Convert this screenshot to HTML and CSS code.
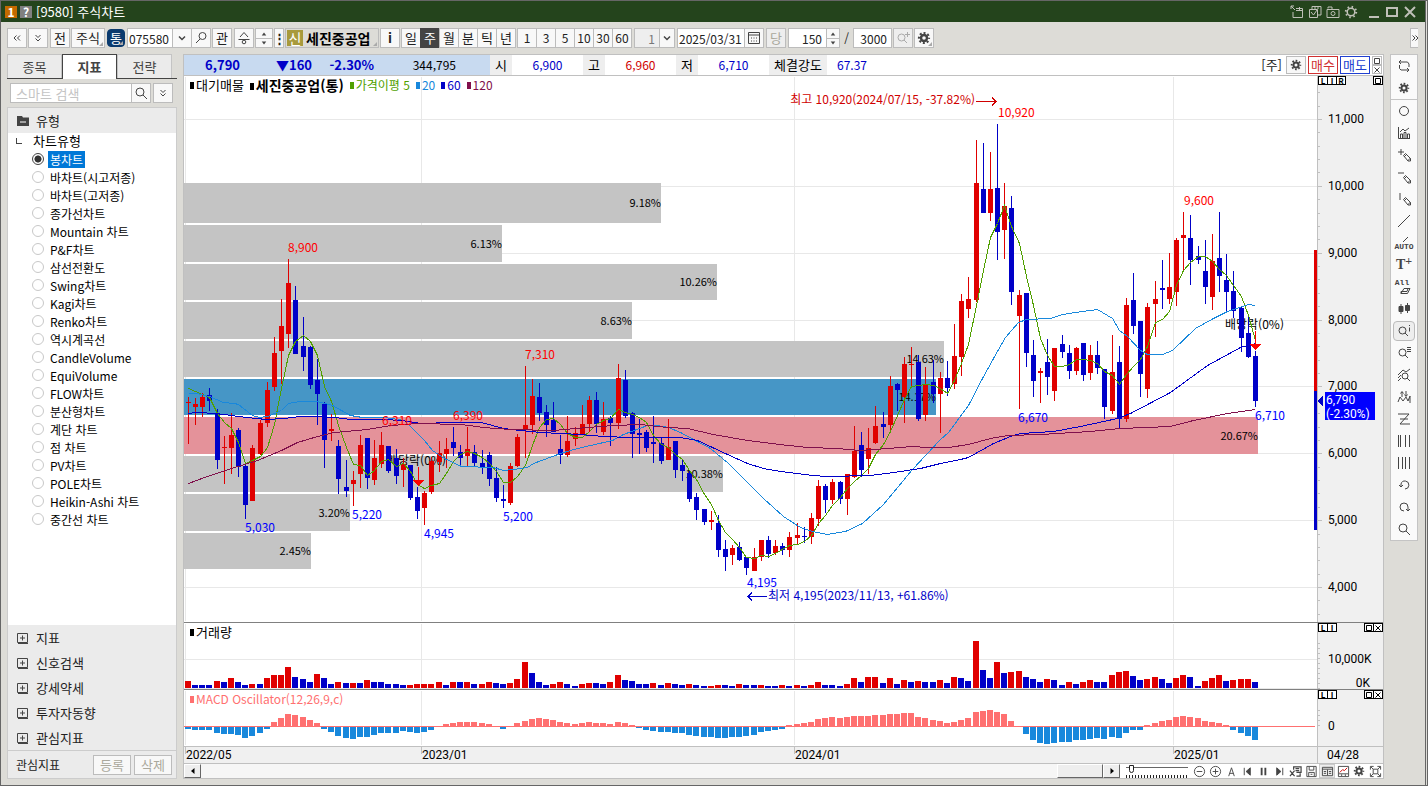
FILE: index.html
```
<!DOCTYPE html>
<html lang="ko">
<head>
    <meta charset="UTF-8">
    <meta name="viewport" content="width=device-width, initial-scale=1.0">
    <title>[9580] 주식차트</title>
    <link rel="stylesheet" href="styles.css">
</head>
<body>
    <!-- shared icons -->
    <svg class="defs" aria-hidden="true">
        <symbol id="gear" viewBox="0 0 14 14"><circle cx="7" cy="7" r="3" fill="none" stroke="currentColor" stroke-width="2.4"/><circle cx="7" cy="7" r="5" fill="none" stroke="currentColor" stroke-width="2.2" stroke-dasharray="1.96 1.96" stroke-dashoffset="1"/></symbol>
        <symbol id="search" viewBox="0 0 14 14"><circle cx="6" cy="6" r="4"/><path d="M9 9l4 4"/></symbol>
        <symbol id="plusbox" viewBox="0 0 12 12"><path d="M.5 1.5h10v9H.5zM3 6h5M5.500 3.500v5M1 11.500h10"/></symbol>
        <symbol id="pencil" viewBox="0 0 14 14"><path d="M5.500 6.500l2-2 5 5v2.500h-2.500zM6 8l3-3M9.500 12l3-3"/></symbol>
        <symbol id="square" viewBox="0 0 8 8"><path d="M1.500 1.500h5v5h-5z"/></symbol>
        <symbol id="cross" viewBox="0 0 8 8"><path d="M1.500 1.500l5 5M6.500 1.500l-5 5"/></symbol>
        <symbol id="up" viewBox="0 0 8 8"><path d="M1 6l3-4 3 4z"/></symbol>
        <symbol id="down" viewBox="0 0 8 8"><path d="M1 2l3 4 3-4z"/></symbol>
    </svg>

    <div class="window">
        <header class="titlebar">
            <span class="badge orange">1</span>
            <span class="badge gray">?</span>
            <h1>[9580] 주식차트</h1>
            <div class="window-buttons">
                <button aria-label="분리"><svg viewBox="0 0 14 14"><path d="M1 1l4 4M1 4V1h3M3 7v5.500h9.500V3.500H6M6 5.500h6.500M9.500 2v3"/></svg></button>
                <button aria-label="복사"><svg viewBox="0 0 14 14"><path d="M1.500 4.500h8v8h-8zM4 4V1.500h9V10h-3M7 2v2M10 2v2M3 7l2.500 3L9 5"/></svg></button>
                <button aria-label="캡처"><svg viewBox="0 0 14 14"><path d="M1 4.500h12v8H1zM2 3.500V2h4v2"/><circle cx="7" cy="8.500" r="2"/></svg></button>
                <button aria-label="설정"><svg viewBox="0 0 14 14"><circle cx="7" cy="7" r="3.800" stroke-width="1.500"/><circle cx="7" cy="7" r="5.200" stroke-width="2" stroke-dasharray="1.500 2.580"/></svg></button>
                <button class="big first" aria-label="최소화"><svg viewBox="0 0 14 14"><path d="M2 12h10"/></svg></button>
                <button class="big" aria-label="최대화"><svg viewBox="0 0 14 14"><path d="M2 3h10v8H2z"/></svg></button>
                <button class="big" aria-label="닫기"><svg viewBox="0 0 14 14"><path d="M2 2l10 10M12 2L2 12"/></svg></button>
            </div>
        </header>

        <div class="toolbar">
            <button class="btn" aria-label="이전"><svg viewBox="0 0 14 14"><path d="M6.500 4.500L4 7l2.500 2.500M10 4.500L7.500 7l2.500 2.500"/></svg></button>
            <button class="btn" aria-label="더보기"><svg viewBox="0 0 14 14"><path d="M4.500 4l2.500 2.500L9.500 4M4.500 7.500L7 10l2.500-2.500"/></svg></button>
            <button class="btn gap-left">전</button>
            <button class="btn wide corner">주식</button>
            <button class="btn navy corner">통</button>
            <div class="joined">
                <input class="code" type="text" value="075580" aria-label="종목코드">
                <button class="btn" aria-label="목록"><svg viewBox="0 0 14 14"><path d="M4 5.500l3 3 3-3" stroke-width="1.500"/></svg></button>
                <button class="btn" aria-label="찾기"><svg viewBox="0 0 14 14"><circle cx="8.500" cy="5" r="3.500"/><path d="M6 8l-4 4"/></svg></button>
            </div>
            <button class="btn">관</button>
            <button class="btn up gap-left" aria-label="이동"><svg viewBox="0 0 14 14"><path d="M7 1.500L3 6M7 1.500L11 6M1.500 8.500h11"/><circle cx="7" cy="11" r="1.800"/></svg></button>
            <div class="spin"><button aria-label="위"><svg><use href="#up"/></svg></button><button aria-label="아래"><svg><use href="#down"/></svg></button></div>
            <button class="btn dots" aria-label="메뉴">⋮</button>
            <button class="stock corner"><span class="new">신</span><b>세진중공업</b></button>
            <button class="btn"><b>i</b></button>
            <div class="joined periods">
                <button class="btn">일</button>
                <button class="btn on">주</button>
                <button class="btn">월</button>
                <button class="btn">분</button>
                <button class="btn">틱</button>
                <button class="btn">년</button>
            </div>
            <div class="joined periods numbers">
                <button class="btn">1</button>
                <button class="btn">3</button>
                <button class="btn">5</button>
                <button class="btn">10</button>
                <button class="btn">30</button>
                <button class="btn">60</button>
            </div>
            <div class="joined gap-left">
                <input class="unit" type="text" value="1" aria-label="단위">
                <button class="btn small" aria-label="단위 목록"><svg viewBox="0 0 14 14"><path d="M4 5.500l3 3 3-3" stroke-width="1.500"/></svg></button>
            </div>
            <div class="joined gap-left">
                <input class="date" type="text" value="2025/03/31" aria-label="날짜">
                <button class="btn" aria-label="달력"><svg viewBox="0 0 14 14"><path d="M1.500 1.500h11v11h-11zM1.500 4h11"/><path d="M4 7h7M4 10h7" stroke-dasharray="1 1.500"/></svg></button>
            </div>
            <button class="btn gap-left dim">당</button>
            <div class="joined gap-left">
                <input class="count" type="text" value="150" aria-label="표시 개수">
                <div class="spin narrow"><button aria-label="증가"><svg><use href="#up"/></svg></button><button aria-label="감소"><svg><use href="#down"/></svg></button></div>
            </div>
            <span class="slash">/</span>
            <input class="total" type="text" value="3000" aria-label="전체 개수">
            <button class="btn dim" aria-label="확대"><svg viewBox="0 0 14 14"><circle cx="5.500" cy="6.500" r="3.500"/><path d="M8 9l3 3M9 3.500h5M11.500 1v5"/></svg></button>
            <button class="btn corner" aria-label="설정"><svg class="fill"><use href="#gear"/></svg></button>
            <button class="btn expand" aria-label="도구 더보기"><svg viewBox="0 0 6 14"><path d="M.5 4.500L3 7 .5 9.500M3.500 4.500L6 7 3.500 9.500"/></svg></button>
        </div>

        <div class="body">
            <aside class="sidebar">
                <nav class="tabs">
                    <button>종목</button>
                    <button class="on">지표</button>
                    <button>전략</button>
                </nav>
                <div class="find">
                    <div class="joined">
                        <input type="text" placeholder="스마트 검색" aria-label="스마트 검색">
                        <button class="btn" aria-label="검색"><svg><use href="#search"/></svg></button>
                    </div>
                    <button class="btn" aria-label="펼치기"><svg viewBox="0 0 14 14"><path d="M4.500 4l2.500 2.500L9.500 4M4.500 7.500L7 10l2.500-2.500"/></svg></button>
                </div>
                <button class="section first"><svg viewBox="0 0 12 12"><path d="M0 1h5l1 1.500h6V11H0z" fill="#444" stroke="none"/><path d="M3 7h6" stroke="#fff"/></svg>유형</button>
                <fieldset class="tree">
                    <legend>차트유형</legend>
                    <label><input type="radio" name="type" checked><span>봉차트</span></label>
                    <label><input type="radio" name="type"><span>바차트(시고저종)</span></label>
                    <label><input type="radio" name="type"><span>바차트(고저종)</span></label>
                    <label><input type="radio" name="type"><span>종가선차트</span></label>
                    <label><input type="radio" name="type"><span>Mountain 차트</span></label>
                    <label><input type="radio" name="type"><span>P&amp;F차트</span></label>
                    <label><input type="radio" name="type"><span>삼선전환도</span></label>
                    <label><input type="radio" name="type"><span>Swing차트</span></label>
                    <label><input type="radio" name="type"><span>Kagi차트</span></label>
                    <label><input type="radio" name="type"><span>Renko차트</span></label>
                    <label><input type="radio" name="type"><span>역시계곡선</span></label>
                    <label><input type="radio" name="type"><span>CandleVolume</span></label>
                    <label><input type="radio" name="type"><span>EquiVolume</span></label>
                    <label><input type="radio" name="type"><span>FLOW차트</span></label>
                    <label><input type="radio" name="type"><span>분산형차트</span></label>
                    <label><input type="radio" name="type"><span>계단 차트</span></label>
                    <label><input type="radio" name="type"><span>점 차트</span></label>
                    <label><input type="radio" name="type"><span>PV차트</span></label>
                    <label><input type="radio" name="type"><span>POLE차트</span></label>
                    <label><input type="radio" name="type"><span>Heikin-Ashi 차트</span></label>
                    <label><input type="radio" name="type"><span>중간선 차트</span></label>
                </fieldset>
                <button class="section"><svg><use href="#plusbox"/></svg>지표</button>
                <button class="section"><svg><use href="#plusbox"/></svg>신호검색</button>
                <button class="section"><svg><use href="#plusbox"/></svg>강세약세</button>
                <button class="section"><svg><use href="#plusbox"/></svg>투자자동향</button>
                <button class="section"><svg><use href="#plusbox"/></svg>관심지표</button>
                <div class="favorites">
                    <span>관심지표</span>
                    <button>등록</button>
                    <button>삭제</button>
                </div>
            </aside>

            <main class="chart">
                <div class="quote">
                    <div class="now"><b class="price">6,790</b><b class="diff">▼160</b><b class="rate">-2.30%</b><span class="vol">344,795</span></div>
                    <span class="key">시</span><span class="val">6,900</span>
                    <span class="key">고</span><span class="val red">6,960</span>
                    <span class="key">저</span><span class="val">6,710</span>
                    <span class="key long">체결강도</span><span class="val power">67.37</span>
                    <div class="order">
                        <span>[주]</span>
                        <button class="btn" aria-label="설정"><svg class="fill"><use href="#gear"/></svg></button>
                        <button class="buy">매수</button>
                        <button class="sell">매도</button>
                        <div class="mini"><button aria-label="최대화"><svg><use href="#square"/></svg></button><button aria-label="닫기"><svg><use href="#cross"/></svg></button></div>
                    </div>
                </div>

                <section class="panel price-panel">
                    <svg id="price"></svg>
                    <div class="legend">
                        <span>대기매물</span>
                        <b>세진중공업(통)</b>
                        <span class="ma5">가격이평 5</span>
                        <span class="ma20">20</span>
                        <span class="ma60">60</span>
                        <span class="ma120">120</span>
                    </div>
                    <div class="scale"><button>L</button><button>I</button><button>R</button></div>
                    <div class="close"><button aria-label="최대화"><svg><use href="#square"/></svg></button></div>
                </section>
                <section class="panel volume-panel">
                    <svg id="volume"></svg>
                    <div class="legend"><span>거래량</span></div>
                    <div class="scale"><button>L</button><button>I</button></div>
                    <div class="close"><button aria-label="최대화"><svg><use href="#square"/></svg></button><button aria-label="닫기"><svg><use href="#cross"/></svg></button></div>
                </section>
                <section class="panel macd-panel">
                    <svg id="macd"></svg>
                    <div class="legend"><span class="osc">MACD Oscillator(12,26,9,c)</span></div>
                    <div class="scale"><button>L</button><button>I</button></div>
                    <div class="close"><button aria-label="최대화"><svg><use href="#square"/></svg></button><button aria-label="닫기"><svg><use href="#cross"/></svg></button></div>
                </section>
                <section class="panel date-panel"><svg id="dates"></svg></section>

                <div class="bottombar">
                    <button class="arrow" aria-label="왼쪽"><svg viewBox="0 0 8 8"><path d="M5.500 1v6L2 4z"/></svg></button>
                    <div class="track"><div class="thumb"></div></div>
                    <button class="arrow" aria-label="오른쪽"><svg viewBox="0 0 8 8"><path d="M2.500 1v6L6 4z"/></svg></button>
                    <div class="zoom"><input type="range" min="0" max="20" value="1" aria-label="확대"></div>
                    <div class="tools">
                        <button aria-label="축소"><svg viewBox="0 0 14 14"><circle cx="7" cy="7" r="5.500"/><path d="M4 7h6"/></svg></button>
                        <button aria-label="확대"><svg viewBox="0 0 14 14"><circle cx="7" cy="7" r="5.500"/><path d="M4 7h6M7 4v6"/></svg></button>
                        <button aria-label="자동"><svg viewBox="0 0 14 14"><path d="M4 12L7 3l3 9M5 9h4"/></svg></button>
                        <button aria-label="처음"><svg viewBox="0 0 14 14"><path d="M3.500 3v8"/><path d="M10 3v8L5.500 7z" fill="#444"/></svg></button>
                        <button aria-label="정지"><svg viewBox="0 0 14 14"><path d="M5 3v8M9 3v8" stroke-width="2"/></svg></button>
                        <button aria-label="끝"><svg viewBox="0 0 14 14"><path d="M10.500 3v8"/><path d="M4 3v8l4.500-4z" fill="#444"/></svg></button>
                        <button aria-label="엑셀"><svg viewBox="0 0 14 14"><path d="M5 5V2h8v6H8M7 4h4M7 6h4M1 6l5 6M6 6l-5 6M8 12h4V9" stroke-width="1.300"/></svg></button>
                        <button aria-label="저장"><svg viewBox="0 0 14 14"><path d="M2 1.500h10v11H2zM4.500 2v3.500h5V2M4 12V8h6v4M6 10h2"/></svg></button>
                        <button class="on" aria-label="표"><svg viewBox="0 0 14 14"><path d="M1.500 2.500h11v9h-11zM1.500 4.500h11M7 5v6M3 7h2.500M3 9h2.500M8.500 7H11M8.500 9H11"/></svg></button>
                        <button aria-label="차트"><svg viewBox="0 0 14 14"><path d="M1.500 1.500h11v11h-11zM2 9.500h10M5 10v2M9 10v2"/><path d="M3 8l3-3 2 1 3-3" stroke="#c00"/></svg></button>
                        <button aria-label="설정"><svg class="fill"><use href="#gear"/></svg></button>
                        <button aria-label="전체화면"><svg viewBox="0 0 14 14"><path d="M1.500 5V1.500H5M9 1.500h3.500V5M12.500 9v3.500H9M5 12.500H1.500V9M2 2l2.500 2.500M12 2L9.500 4.500M12 12L9.500 9.500M2 12l2.500-2.500M4.500 4.500h5v5h-5z"/></svg></button>
                    </div>
                </div>
            </main>

            <nav class="rail">
                <button aria-label="새로고침"><svg viewBox="0 0 14 14"><path d="M4 1L2 3l2 2M2 3h8.500l1.500 2v3M10 9l2 2-2 2M12 11H4L2.500 9.500V6"/></svg></button>
                <button class="line" aria-label="설정"><svg class="fill"><use href="#gear"/></svg></button>
                <button aria-label="원"><svg viewBox="0 0 14 14"><circle cx="7" cy="7" r="4.500"/></svg></button>
                <button aria-label="지표"><svg viewBox="0 0 14 14"><path d="M1.500 1v11.500H13M3.500 12V8h2v4M7 12V6.500h2V12M10.500 12V8h2v4M3 6l3-3 2 2 4-3"/></svg></button>
                <button aria-label="추가"><svg viewBox="0 0 14 14"><path d="M1 4h6M4 1v6"/><use href="#pencil" x="1" y="1" width="14" height="14"/></svg></button>
                <button aria-label="수평선"><svg viewBox="0 0 14 14"><path d="M1 3h6"/><use href="#pencil" x="1" y="1" width="14" height="14"/></svg></button>
                <button aria-label="수직선"><svg viewBox="0 0 14 14"><path d="M3 1v7"/><use href="#pencil" x="1" y="1" width="14" height="14"/></svg></button>
                <button aria-label="추세선"><svg viewBox="0 0 14 14"><path d="M1 13L13 1"/></svg></button>
                <button class="auto"><svg viewBox="0 0 14 6"><path d="M6 6l5-5"/></svg>AUTO</button>
                <button class="text">T<sup>+</sup></button>
                <button class="all"><span>All</span><svg viewBox="0 0 14 8"><path d="M4 6.500l3-5h6l-2.500 5H4v-2h6l1-3"/></svg></button>
                <button aria-label="봉"><svg viewBox="0 0 14 14"><path d="M4 2v10M10.500 1v10"/><path d="M2 4.500h4v5H2zM8.500 3.500h4v5h-4z" fill="#444"/></svg></button>
                <button class="on" aria-label="정보"><svg viewBox="0 0 14 14"><circle cx="5.500" cy="6.500" r="3.500"/><path d="M8 9l3 3M12.500 3.500v4M12.500 1v1"/></svg></button>
                <button aria-label="목록"><svg viewBox="0 0 14 14"><circle cx="5.500" cy="6.500" r="3.500"/><path d="M8 9l3 3M10 1.500h4M10 3.500h4M10 5.500h4"/></svg></button>
                <button aria-label="분석"><svg viewBox="0 0 14 14"><path d="M1 7l5-5 3 2 4-3M1 10l3-3M1 13l3-3"/><circle cx="8" cy="8" r="3"/><path d="M10 10l3 3"/></svg></button>
                <button aria-label="패턴"><svg viewBox="0 0 14 14"><path d="M1 12l2-5 3 4 3-4 2 4 2-5v7M5 7V2M3.500 3.500L5 1.500l1.500 2M9 1v5M7.500 4.500L9 6.500l1.500-2"/></svg></button>
                <button aria-label="지그재그"><svg viewBox="0 0 14 14"><path d="M1 2h11L3 12h10M3 7h8"/></svg></button>
                <button aria-label="간격"><svg viewBox="0 0 14 14"><path d="M1.500 1v12M3.500 1v12M8.500 1v12M12.500 1v12"/></svg></button>
                <button aria-label="등간격"><svg viewBox="0 0 14 14"><path d="M1.500 1v12M5.500 1v12M8.500 1v12M12.500 1v12"/></svg></button>
                <button aria-label="되돌리기"><svg viewBox="0 0 14 14"><path d="M4 8V6a4 4 0 1 1 4 5M2 7l2 2 2-2"/></svg></button>
                <button aria-label="다시하기"><svg viewBox="0 0 14 14"><path d="M7 11a4 4 0 1 1 4-4v4M9 9l2 2 2-2"/></svg></button>
                <button aria-label="검색"><svg><use href="#search"/></svg></button>
            </nav>
        </div>
    </div>

    <script src="chart.js"></script>
</body>
</html>
```
FILE: styles.css
```
* {
    box-sizing: border-box;
}
body {
    margin: 0;
    font-family: "Noto Sans CJK KR", "Noto Sans", sans-serif;
    font-size: 12px;
    line-height: 18px;
    color: #222;
}
button, input {
    font: inherit;
    color: inherit;
    margin: 0;
    padding: 0;
    border: 0;
    border-radius: 0;
    background: none;
}
button {
    display: flex;
    align-items: center;
    justify-content: center;
    white-space: nowrap;
}
svg {
    fill: none;
    stroke: #444;
    width: 14px;
    height: 14px;
    flex: none;
}
svg.fill {
    color: #444;
    stroke: none;
}
.defs {
    position: absolute;
    width: 0;
    height: 0;
}
.window {
    display: flex;
    flex-direction: column;
    min-height: 100vh;
    background: #dddcd7;
    border: 1px solid #666;
    border-right: 3px double #666;
}

/* title bar */
.titlebar {
    display: flex;
    align-items: center;
    gap: 3px;
    height: 21px;
    padding: 0 8px 0 4px;
    background: #24441c;
    color: #fff;
}
.titlebar h1 {
    margin: 0 0 0 1px;
    font-size: 13px;
    font-weight: normal;
}
.badge {
    width: 12px;
    height: 12px;
    line-height: 12px;
    text-align: center;
    font-weight: bold;
}
.orange {
    background: #c46a00;
}
.gray {
    background: #808080;
}
.window-buttons {
    display: flex;
    gap: 4px;
    margin-left: auto;
}
.window-buttons svg {
    stroke: #c0c0b8;
}
.window-buttons .first {
    margin-left: 5px;
}
.window-buttons .big svg {
    stroke-width: 2;
}

/* toolbar */
.toolbar {
    display: flex;
    align-items: center;
    height: 32px;
    padding: 0 7px 0 6px;
    gap: 1px;
}
.btn {
    width: 20px;
    height: 20px;
    flex: none;
    background: #f8f8f8;
    border: 1px solid #bcbcbc;
    font-size: 13px;
    color: #222;
}
.btn.wide {
    width: 34px;
}
.btn.small {
    width: 16px;
}
.btn.up {
    margin-left: 1px;
}
.btn.dots {
    width: 10px;
    font-weight: bold;
}
.btn.navy {
    width: 18px;
    height: 18px;
    margin: 0 1px;
    background: #0a3a6e;
    border-color: #0a3a6e;
    border-radius: 4px;
    color: #fff;
}
.btn.dim {
    background: #eee;
    color: #aaa89c;
}
.btn.dim svg {
    stroke: #aaa;
}
.gap-left {
    margin-left: 1px;
}
.corner {
    position: relative;
}
.corner::after {
    content: "";
    position: absolute;
    right: 1px;
    bottom: 1px;
    border: 2px solid #aaa;
    border-top-color: transparent;
    border-left-color: transparent;
}
.joined {
    display: flex;
}
.joined .btn {
    margin-left: -1px;
}
.periods .btn:first-child {
    margin-left: 0;
}
.numbers .btn {
    font-size: 12px;
}
.btn.on {
    background: #444;
    border-color: #444;
    color: #fff;
}
.toolbar input {
    height: 20px;
    border: 1px solid #bcbcbc;
    background: #fff;
    font-size: 12px;
}
.toolbar .code {
    width: 46px;
    padding-left: 1px;
}
.toolbar .unit {
    width: 26px;
    padding-right: 4px;
    text-align: right;
    background: #eee;
    color: #777;
}
.toolbar .date {
    width: 68px;
    padding-left: 1px;
}
.toolbar .count, .toolbar .total {
    width: 39px;
    padding-right: 4px;
    text-align: right;
}
.slash {
    width: 11px;
    text-align: center;
}
.spin {
    display: flex;
    flex-direction: column;
    width: 18px;
    height: 20px;
    border: 1px solid #bcbcbc;
    background: #f8f8f8;
}
.spin.narrow {
    width: 14px;
    margin-left: -1px;
}
.spin button {
    height: 9px;
}
.spin svg {
    width: 6px;
    height: 6px;
    fill: #444;
    stroke: none;
}
.spin button + button {
    border-top: 1px solid #bcbcbc;
}
.stock {
    width: 94px;
    height: 20px;
    justify-content: flex-start;
    gap: 3px;
    padding: 1px;
    border: 1px solid #bcbcbc;
    font-size: 14px;
    color: #000;
}
.new {
    width: 16px;
    line-height: 16px;
    background: #a89a3c;
    color: #fff;
}
.btn.expand {
    width: 8px;
    margin-left: auto;
    border-right: 0;
}
.btn.expand svg {
    width: 6px;
}

.body {
    display: flex;
    flex: 1;
    align-items: stretch;
    gap: 6px;
    padding: 0 7px 6px 6px;
}

/* sidebar */
.sidebar {
    display: flex;
    flex-direction: column;
    width: 170px;
    flex: none;
}
.tabs {
    display: flex;
    height: 25px;
    border-bottom: 1px solid #444;
}
.tabs button {
    width: 55px;
    height: 24px;
    background: #ebebeb;
    border: 1px solid #c4c4c4;
    border-bottom: 0;
    font-size: 13px;
    color: #444;
}
.tabs .on {
    height: 25px;
    background: #fff;
    border-color: #444;
    font-weight: bold;
}
.find {
    display: flex;
    justify-content: space-between;
    padding: 4px 4px 4px 3px;
    height: 28px;
}
.find input {
    width: 122px;
    height: 20px;
    padding-left: 5px;
    border: 1px solid #bcbcbc;
    background: #fff;
    font-size: 13px;
}
.find input::placeholder {
    color: #c4c4c4;
}
.section {
    height: 25px;
    flex: none;
    justify-content: flex-start;
    gap: 7px;
    padding-left: 9px;
    background: #ebebeb;
    border: 0 solid #ccc;
    border-width: 0 1px;
    font-size: 13px;
}
.section.first {
    height: 26px;
    border-top-width: 1px;
}
.section svg {
    width: 12px;
    height: 12px;
}
.tree {
    flex: 1;
    min-width: 0;
    margin: 0;
    padding: 0 0 0 24px;
    border: 0 solid #ccc;
    border-width: 0 1px;
    background: #fff;
    color: #000;
}
.tree legend {
    float: left;
    width: 100%;
    height: 17px;
    padding: 0;
    line-height: 16px;
    font-size: 13px;
}
.tree legend::before {
    content: "";
    float: left;
    width: 5px;
    height: 5px;
    margin: 5px 11px 0 -16px;
    border: 1px solid #444;
    border-width: 0 0 1px 1px;
}
.tree label {
    display: flex;
    clear: both;
    align-items: center;
    gap: 4px;
    height: 18px;
}
.tree input {
    appearance: none;
    width: 12px;
    height: 12px;
    border: 1px solid #c8c8c8;
    border-radius: 50%;
    background: #fff;
}
.tree input:checked {
    border-color: #444;
    background: radial-gradient(#333 45%, #fff 55%);
}
.tree span {
    padding: 0 2px;
    line-height: 17px;
}
.tree input:checked + span {
    background: #0078d7;
    color: #fff;
}
.favorites {
    display: flex;
    align-items: center;
    gap: 3px;
    height: 29px;
    padding: 0 4px 0 8px;
    border: 1px solid #ccc;
    background: #ebebeb;
}
.favorites span {
    flex: 1;
}
.favorites button {
    width: 38px;
    height: 20px;
    border: 1px solid #bcbcbc;
    background: #f8f8f8;
    font-size: 13px;
    color: #aaa89c;
}

/* quote bar */
.chart {
    display: flex;
    flex-direction: column;
    flex: 1;
    min-width: 0;
    border: 1px solid #c0c0c0;
    background: #fff;
}
.quote {
    display: flex;
    height: 21px;
    line-height: 20px;
    border-bottom: 1px solid #c0c0c0;
    color: #0000c8;
}
.now {
    display: flex;
    width: 306px;
    background: #c8daf0;
    text-align: right;
}
.now b {
    font-size: 13px;
}
.now .price {
    width: 56px;
}
.now .diff {
    width: 72px;
}
.now .rate {
    width: 62px;
}
.now .vol {
    width: 82px;
    color: #000;
}
.key {
    width: 22px;
    background: #eee;
    text-align: center;
    font-size: 13px;
    color: #000;
}
.key.long {
    width: 58px;
}
.val {
    width: 71px;
    text-align: center;
}
.val.power {
    width: 50px;
}
.red {
    color: #d00000;
}
.order {
    display: flex;
    align-items: center;
    gap: 2px;
    margin-left: auto;
    padding-right: 1px;
    color: #222;
}
.order > span {
    margin-right: 2px;
    font-size: 13px;
}
.order .btn, .buy, .sell {
    height: 18px;
}
.order .fill {
    width: 12px;
    height: 12px;
}
.buy, .sell {
    width: 30px;
    border: 1px solid #d03030;
    color: #d03030;
    font-size: 13px;
}
.sell {
    border-color: #2040d0;
    color: #2040d0;
}
.mini button {
    width: 10px;
    height: 9px;
    border: 1px solid #bcbcbc;
}
.mini svg, .close svg {
    width: 8px;
    height: 8px;
}
.close svg {
    stroke: #000;
}

/* chart panels */
.panel {
    position: relative;
    flex: none;
    border-bottom: 1px solid #808080;
}
.panel > svg {
    display: block;
    width: 100%;
    height: 100%;
    overflow: visible;
    stroke: none;
    shape-rendering: crispEdges;
}
.price-panel {
    flex: 1;
    min-height: 400px;
}
.price-panel > svg {
    position: absolute;
}
.volume-panel {
    height: 67px;
}
.macd-panel {
    height: 57px;
    border-color: #c0c0c0;
}
.date-panel {
    height: 17px;
    border-color: #c0c0c0;
}
.legend {
    position: absolute;
    top: 0;
    left: 6px;
    display: flex;
    gap: 6px;
    line-height: 18px;
    font-size: 13px;
    color: #000;
}
.legend > *::before {
    content: "";
    display: inline-block;
    width: 4px;
    height: 7px;
    margin: 0 2px 1px 0;
    background: currentColor;
}
.legend b {
    font-size: 14px;
}
.legend [class] {
    font-size: 12px;
}
.ma5 { color: #50a000; }
.ma20 { color: #1888dc; }
.ma60 { color: #0000c8; }
.ma120 { color: #80104c; }
.osc { color: #ff7070; }
.scale, .close {
    position: absolute;
    top: 0;
    display: flex;
}
.scale {
    right: 56px;
    width: 9px;
}
.close {
    right: 0;
}
.scale button, .close button {
    width: 10px;
    height: 9px;
    flex: none;
    margin-right: -1px;
    border: 1px solid #000;
    background: #fff;
    font-size: 8px;
    line-height: 7px;
    font-weight: bold;
    color: #000;
}
.close button {
    margin: 0 0 0 -1px;
}
#price text {
    font-size: 12px;
}
#price .share {
    font-size: 11px;
}
#price .axis, #volume .axis, #macd .axis, #dates text {
    font-family: Roboto, "Noto Sans", sans-serif;
    font-size: 12px;
}

/* scroll bar and chart tools */
.bottombar {
    display: flex;
    height: 14px;
    align-items: center;
}
.arrow, .thumb {
    height: 14px;
    border: 1px solid;
    border-color: #fff #666 #666 #fff;
    background: #eee;
}
.arrow {
    width: 17px;
}
.arrow svg {
    width: 8px;
    height: 8px;
    fill: #000;
    stroke: none;
}
.track {
    display: flex;
    justify-content: flex-end;
    flex: 1;
    background: #f6f6f6;
}
.thumb {
    width: 46px;
}
.zoom {
    width: 71px;
    padding-left: 6px;
    background: repeating-linear-gradient(90deg, #222 0 1px, transparent 1px 3px) 6px 100% / 62px 3px no-repeat;
}
.zoom input {
    display: block;
    width: 62px;
    height: 14px;
    appearance: none;
    background: linear-gradient(#666, #666) 0 3px / 100% 1px no-repeat;
}
.zoom input::-webkit-slider-thumb {
    appearance: none;
    width: 5px;
    height: 8px;
    margin-top: -4px;
    border: 1px solid #222;
    border-radius: 0 0 3px 3px;
    background: #fff;
}
.tools {
    display: flex;
}
.tools button {
    width: 16px;
    height: 14px;
}
.tools .on {
    border: 1px solid #ccc;
    background: #eee;
}
.tools svg {
    width: 13px;
    height: 13px;
}
.tools .fill {
    width: 12px;
    height: 12px;
}

/* right tool rail */
.rail {
    display: flex;
    flex-direction: column;
    align-self: flex-start;
    width: 28px;
    flex: none;
    border: 1px solid #c4c4c4;
    background: #fafafa;
}
.rail button {
    height: 22px;
    color: #444;
}
.rail .line {
    height: 23px;
    border-bottom: 1px solid #c4c4c4;
}
.rail .fill {
    width: 12px;
    height: 12px;
}
.rail .on {
    width: 22px;
    height: 20px;
    margin: 1px auto;
    border: 1px solid #bbb;
    border-radius: 4px;
    background: #eee;
}
.rail .auto, .rail .all {
    flex-direction: column;
    font-family: "Liberation Mono", monospace;
    font-size: 8px;
    line-height: 8px;
    font-weight: bold;
}
.rail .auto svg, .rail .all svg {
    height: 8px;
}
.rail .all span {
    margin-right: 4px;
}
.rail .text {
    font-family: "Liberation Serif", serif;
    font-size: 14px;
    font-weight: bold;
}
.rail sup {
    line-height: 8px;
    font-size: 12px;
    margin-bottom: 8px;
}
```
FILE: chart.js
```
// Drawing surface the data below was laid out on: plot 184..1317 wide,
// price pane 76..622 high. Everything is rescaled to the real pane size.
const LEFT = 184, PLOT = 1133, TOP = 76, HEIGHT = 546, AXIS = 66;
const RED = '#e00000', BLUE = '#0000c8';

// dir high bodyTop bodyBottom low
const candles = `
r 397 402 403 444,r 398 404 407 425,r 393 397 407 417,b 388 395 401 411,b 409 413 460 469,
r 436 447 448 484,r 413 435 448 474,b 428 430 467 477,b 464 466 505 519,r 445 448 501 501,
r 420 423 454 455,r 382 390 423 427,r 337 353 387 391,r 299 326 351 384,r 259 283 334 348,
b 286 300 354 354,b 317 346 357 371,b 346 347 385 389,b 359 380 394 425,b 402 404 440 468,
r 414 429 431 441,b 440 446 479 494,b 460 487 491 497,r 471 480 484 506,r 435 445 474 488,
b 438 438 478 489,r 440 458 480 485,r 432 445 464 468,b 446 446 471 473,b 449 458 476 484,
r 458 464 470 487,b 465 465 498 500,b 487 497 511 519,r 491 493 508 525,r 457 461 492 494,
r 441 453 462 472,r 438 449 454 468,b 427 442 448 456,b 445 452 458 465,r 427 449 456 466,
b 445 452 463 466,b 450 463 467 474,b 452 455 479 486,b 467 478 498 502,b 485 499 501 508,
r 463 466 503 505,r 434 437 466 467,r 366 425 429 458,r 379 396 425 434,b 383 397 413 421,
b 405 412 425 437,b 402 420 432 432,b 435 449 455 464,r 416 441 455 457,r 427 433 439 446,
r 405 424 434 434,r 396 400 424 432,b 392 400 424 433,r 402 419 432 435,b 416 418 423 446,
r 364 378 423 429,b 370 380 416 418,b 412 413 434 458,b 419 433 435 454,b 430 432 448 452,
b 416 442 444 463,b 438 443 461 464,r 419 447 460 460,b 441 441 470 478,b 460 465 471 481,
b 470 473 499 502,b 493 497 510 520,b 509 509 522 525,r 511 520 522 530,b 515 523 550 557,
b 540 549 557 571,r 545 548 555 565,b 542 547 560 561,b 557 557 568 575,r 548 557 571 571,
r 540 540 557 561,b 536 540 554 558,r 540 546 553 555,b 543 546 550 555,r 532 537 550 557,
r 523 535 538 544,b 527 536 537 543,r 513 518 537 544,r 480 486 519 526,b 484 486 500 513,
r 479 482 500 504,b 481 482 499 504,r 474 474 499 515,r 426 451 477 478,b 432 445 470 477,
r 428 448 459 474,r 406 426 443 444,b 412 424 427 438,r 376 386 425 433,b 383 384 390 411,
r 357 364 397 423,r 347 364 365 386,b 355 362 419 421,r 367 384 415 421,b 360 382 394 403,
r 372 378 394 433,b 361 378 388 396,r 324 356 384 389,r 294 301 357 376,r 277 299 309 318,
r 140 183 300 302,b 143 189 213 213,r 152 189 213 221,b 124 188 232 260,r 183 206 230 259,
b 196 208 292 305,r 290 295 316 409,b 293 293 353 367,b 340 355 381 397,r 368 371 373 403,
b 339 362 377 395,r 348 348 391 401,b 335 344 352 358,b 345 353 371 379,r 347 348 371 375,
b 343 343 375 381,r 345 355 373 380,b 341 355 368 374,b 369 369 407 419,r 335 372 411 414,
b 346 362 419 428,r 298 305 419 422,b 273 300 326 334,b 321 321 374 397,r 303 307 389 398,
r 281 299 304 337,b 260 288 290 309,r 253 287 299 304,r 238 240 292 306,r 212 235 238 272,
b 215 238 260 285,b 246 256 260 264,b 240 271 287 304,r 234 261 297 310,b 212 258 276 292,
b 254 280 292 312,b 271 291 311 318,b 307 308 338 352,b 315 333 357 358,b 351 356 401 407
`.trim().split(',').map(row => {
    const [dir, ...v] = row.trim().split(' ');
    return { up: dir === 'r', high: +v[0], top: +v[1], bottom: +v[2], low: +v[3] };
});

// negative = volume of a falling week
const volumes = [7,-3,-3,-3,7,-6,10,-6,-3,4,-4,10,13,13,21,-11,-9,-6,14,-10,-4,6,-5,5,-5,8,-6,-6,-4,-4,-3,3,4,4,4,6,
    -3,6,-6,6,-4,4,6,-5,-4,5,9,26,-15,-6,-3,4,6,-4,-2,4,5,-5,-4,6,13,-8,-7,-4,-4,5,-3,5,-4,-3,4,-3,-2,2,3,-3,-2,4,-3,-3,
    3,-2,-2,3,-2,3,-2,3,6,-3,-3,-2,4,10,-6,11,11,-5,10,-4,8,-6,7,-6,-6,8,-5,11,-10,-7,47,-18,-10,26,-15,16,17,-11,-9,-6,
    9,-8,-3,6,-4,6,8,-6,-6,13,16,17,-12,-8,9,11,-9,-5,10,13,-11,-2,7,10,13,-7,8,9,9,-6];

const oscillator = [-2,-3,-3,-3,-6,-7,-7,-8,-11,-9,-6,-2,4,8,12,11,9,6,3,-2,-5,-9,-11,-12,-10,-10,-8,-6,-6,-6,-4,-5,-6,
    -5,-3,0,2,3,4,4,4,3,2,0,-2,0,3,5,7,8,7,6,4,3,2,3,4,3,3,2,4,3,1,-1,-3,-4,-5,-5,-6,-6,-8,-9,-10,-10,-11,-11,-10,-10,
    -9,-8,-5,-4,-3,-2,1,2,3,4,7,8,9,8,9,10,10,10,11,11,12,12,13,13,9,8,6,5,3,4,6,8,14,15,16,14,12,5,0,-7,-13,-16,-17,
    -16,-15,-15,-13,-13,-12,-11,-12,-10,-11,-6,-3,-3,1,3,5,6,9,10,9,8,5,4,3,1,-3,-6,-9,-13];

const ma20 = '188,393 196,393 209,396 223,402 234,403 238,404 252,415 259,417 267,416 281,410 288,403 299,401 317,401 332,405 350,415 362,417 384,417 404,420 424,440 432,450 444,458 461,466 493,467 503,470 513,469 527,467 533,463 560,453 577,448 612,440 623,434 647,425 657,425 668,427 680,432 693,439 710,448 728,463 747,482 763,498 783,516 800,527 812,531 827,534 845,531 862,523 883,504 912,469 940,439 948,432 968,405 982,378 993,358 1005,337 1018,322 1026,319 1050,318 1062,314 1075,312 1097,309 1112,318 1119,330 1127,336 1140,350 1147,354 1162,354 1172,350 1195,328 1213,318 1227,311 1248,304 1255,305';
const ma60 = '188,413 196,412 216,413 231,415 246,417 266,419 284,418 299,416 317,416 334,417 351,419 384,419 401,420 421,423 451,422 481,422 503,428 520,430 540,432 560,433 580,434 603,436 630,437 680,437 697,440 727,454 747,463 763,468 780,471 812,475 827,476 870,475 893,472 920,468 940,463 960,459 968,457 993,443 1010,436 1020,433 1053,431 1080,426 1117,418 1130,413 1170,392 1207,365 1240,347 1255,343';
const ma120 = '188,483 204,477 231,468 257,460 281,450 297,442 317,436 334,432 367,429 391,425 417,423 461,424 483,427 510,429 553,430 587,427 613,425 640,424 667,427 687,428 713,434 747,440 779,444 807,447 837,448 860,450 887,448 912,446 927,447 948,447 968,444 990,438 1007,435 1040,434 1090,431 1120,428 1170,426 1193,420 1227,413 1255,409';

// price bands of waiting volume: top, bottom, right edge, share
const bands = [
    [183, 223, 661, '9.18%'], [225, 262, 502, '6.13%'], [264, 300, 717, '10.26%'], [302, 339, 632, '8.63%'],
    [341, 377, 944, '14.63%'], [379, 415, 936, '14.17%', '#4696c6'], [417, 454, 1258, '20.67%', '#e4929a'],
    [456, 492, 723, '10.38%'], [494, 531, 350, '3.20%'], [533, 569, 311, '2.45%']
];

const labels = [
    ['8,900', 288, 248, '#f00'], ['10,920', 998, 113, '#f00'], ['9,600', 1184, 201, '#f00'], ['7,310', 525, 355, '#f00'],
    ['6,310', 382, 421, '#f00'], ['6,390', 453, 416, '#f00'], ['5,030', 245, 528, '#00f'], ['5,220', 352, 515, '#00f'],
    ['4,945', 424, 534, '#00f'], ['5,200', 503, 517, '#00f'], ['4,195', 747, 583, '#00f'], ['6,670', 1018, 418, '#00f'],
    ['6,710', 1255, 416, '#00f']
];

const years = [['2022/05', 185], ['2023/01', 421], ['2024/01', 794], ['2025/01', 1173]];

function rect(x, y, w, h, fill) {
    return `<rect x="${x}" y="${y}" width="${w}" height="${h}" fill="${fill}"/>`;
}

function text(str, x, y, fill, extra = '') {
    return `<text x="${x}" y="${y + 4}" fill="${fill}" ${extra}>${str}</text>`;
}

function draw() {
    const priceSvg = document.getElementById('price');
    const width = priceSvg.clientWidth;
    const plot = width - AXIS;
    const height = priceSvg.clientHeight;
    const sx = v => Math.round((v - LEFT) * plot / PLOT);
    const sy = v => Math.round((v - TOP) * height / HEIGHT);
    const center = i => sx(188 + i * 7.16);
    const scaled = pts => pts.split(' ').map(p => p.split(',')).map(([x, y]) => sx(+x) + .5 + ',' + (sy(+y) + .5)).join(' ');
    const line = (pts, color) => `<polyline points="${pts}" fill="none" stroke="${color}"/>`;
    const vertical = h => years.map(([, x]) => rect(sx(x), 1, 1, h, '#e8e8e8')).join('');
    const axis = h => rect(plot, 0, AXIS, h, '#f0f0f0') + rect(plot, 0, 1, h, '#c0c0c0');

    // price
    let out = vertical(height - 2);
    let ticks = axis(height);
    for (let p = 11400; p >= 3600; p -= 200) {
        const y = sy(119 + (11000 - p) * .06686);
        const major = p % 1000 === 0;
        if (major) {
            out += rect(0, y, plot, 1, '#e8e8e8');
            ticks += text(p.toLocaleString('en-US'), plot + 11, y, '#000', 'class="axis"');
        }
        ticks += rect(plot, y, major ? 5 : 3, 1, '#c0c0c0');
    }
    bands.forEach(([top, bottom, right, share, color]) => {
        out += rect(0, sy(top), sx(right), sy(bottom) - sy(top), color || '#c4c4c4');
        out += text(share, sx(right), sy((top + bottom) / 2), '#000', 'text-anchor="end" class="share"');
    });
    out += text('배당락(0%)', sx(387), sy(461), '#000');
    out += text('배당락(0%)', sx(1225), sy(325), '#000');
    candles.forEach((c, i) => {
        const color = c.up ? RED : BLUE;
        out += rect(center(i), sy(c.high), 1, sy(c.low) - sy(c.high), color);
        out += rect(center(i) - 2, sy(c.top), 5, Math.max(1, sy(c.bottom) - sy(c.top)), color);
    });
    const closes = candles.map(c => c.up ? c.top : c.bottom);
    const ma5 = [388, 391, 394, 397];
    for (let i = 4; i < closes.length; i++) {
        ma5.push(closes.slice(i - 4, i + 1).reduce((a, b) => a + b) / 5);
    }
    out += line(ma5.map((y, i) => center(i) + .5 + ',' + (sy(y) + .5)).join(' '), '#50a000');
    out += line(scaled(ma20), '#1888dc') + line(scaled(ma60), '#0000c8') + line(scaled(ma120), '#80104c');
    labels.forEach(([str, x, y, color]) => {
        out += text(str, sx(x), sy(y), color);
    });
    [[418, 467], [1255, 331]].forEach(([x, y]) => {
        const ax = sx(x), ay = sy(y);
        out += rect(ax, ay, 1, 14, 'red') + `<path d="M${ax - 5} ${ay + 13}h11l-5 6h-1z" fill="red"/>`;
    });
    out += text('최고 10,920(2024/07/15, -37.82%)', sx(975), sy(100), '#d00000', 'text-anchor="end"');
    out += `<path d="M${sx(976)} ${sy(101)}.5h20m-4 -4l4 4l-4 4" fill="none" stroke="#d00000"/>`;
    out += text('최저 4,195(2023/11/13, +61.86%)', sx(768), sy(596), '#0000c8');
    out += `<path d="M${sx(767)} ${sy(596)}.5h-19m4 -4l-4 4l4 4" fill="none" stroke="#0000c8"/>`;
    // trading range and current price
    out += rect(plot - 3, sy(250), 3, sy(391) - sy(250), RED) + rect(plot - 3, sy(391), 3, sy(530) - sy(391), BLUE);
    const now = sy(401);
    ticks += `<path d="M${plot} ${now}l6 -5v10z" fill="${BLUE}"/>` + rect(plot + 8, now - 9, 50, 28, '#00f');
    ticks += text('6,790', plot + 9, now - 1, '#fff', 'class="axis"') + text('(-2.30%)', plot + 9, now + 13, '#fff', 'class="axis"');
    priceSvg.innerHTML = out + ticks;

    // volume
    out = vertical(65) + rect(0, 36, plot, 1, '#e8e8e8') + rect(0, 65, plot, 1, '#e8e8e8');
    volumes.forEach((v, i) => {
        out += rect(center(i) - 3, 65 - Math.abs(v), 6, Math.abs(v), v > 0 ? RED : BLUE);
    });
    out += axis(66);
    for (let y = 20; y < 66; y += 5) {
        out += rect(plot, y, 3, 1, '#c0c0c0');
    }
    out += text('10,000K', plot + 11, 36, '#000', 'class="axis"') + text('0K', width - 13, 60, '#000', 'class="axis" text-anchor="end"');
    document.getElementById('volume').innerHTML = out;

    // macd oscillator
    out = vertical(54);
    oscillator.forEach((v, i) => {
        out += rect(center(i) - 3, v > 0 ? 36 - v : 37, 6, Math.abs(v), v > 0 ? '#ff7070' : '#1888dc');
    });
    out += rect(0, 36, plot - 2, 1, '#ff7070') + axis(56);
    for (let y = 20; y < 37; y += 5) {
        out += rect(plot, y, 3, 1, '#c0c0c0');
    }
    out += text('0', plot + 11, 36, '#000', 'class="axis"');
    document.getElementById('macd').innerHTML = out;

    // dates
    out = rect(0, 0, width, 16, '#f0f0f0') + rect(plot, 0, 1, 16, '#c0c0c0');
    years.forEach(([str, x]) => {
        out += rect(sx(x), 0, 1, 7, '#c0c0c0') + text(str, sx(x) + 1, 8, '#000');
    });
    out += text('04/28', plot + 10, 8, '#000');
    document.getElementById('dates').innerHTML = out;
}

window.addEventListener('resize', draw);
draw();
```
